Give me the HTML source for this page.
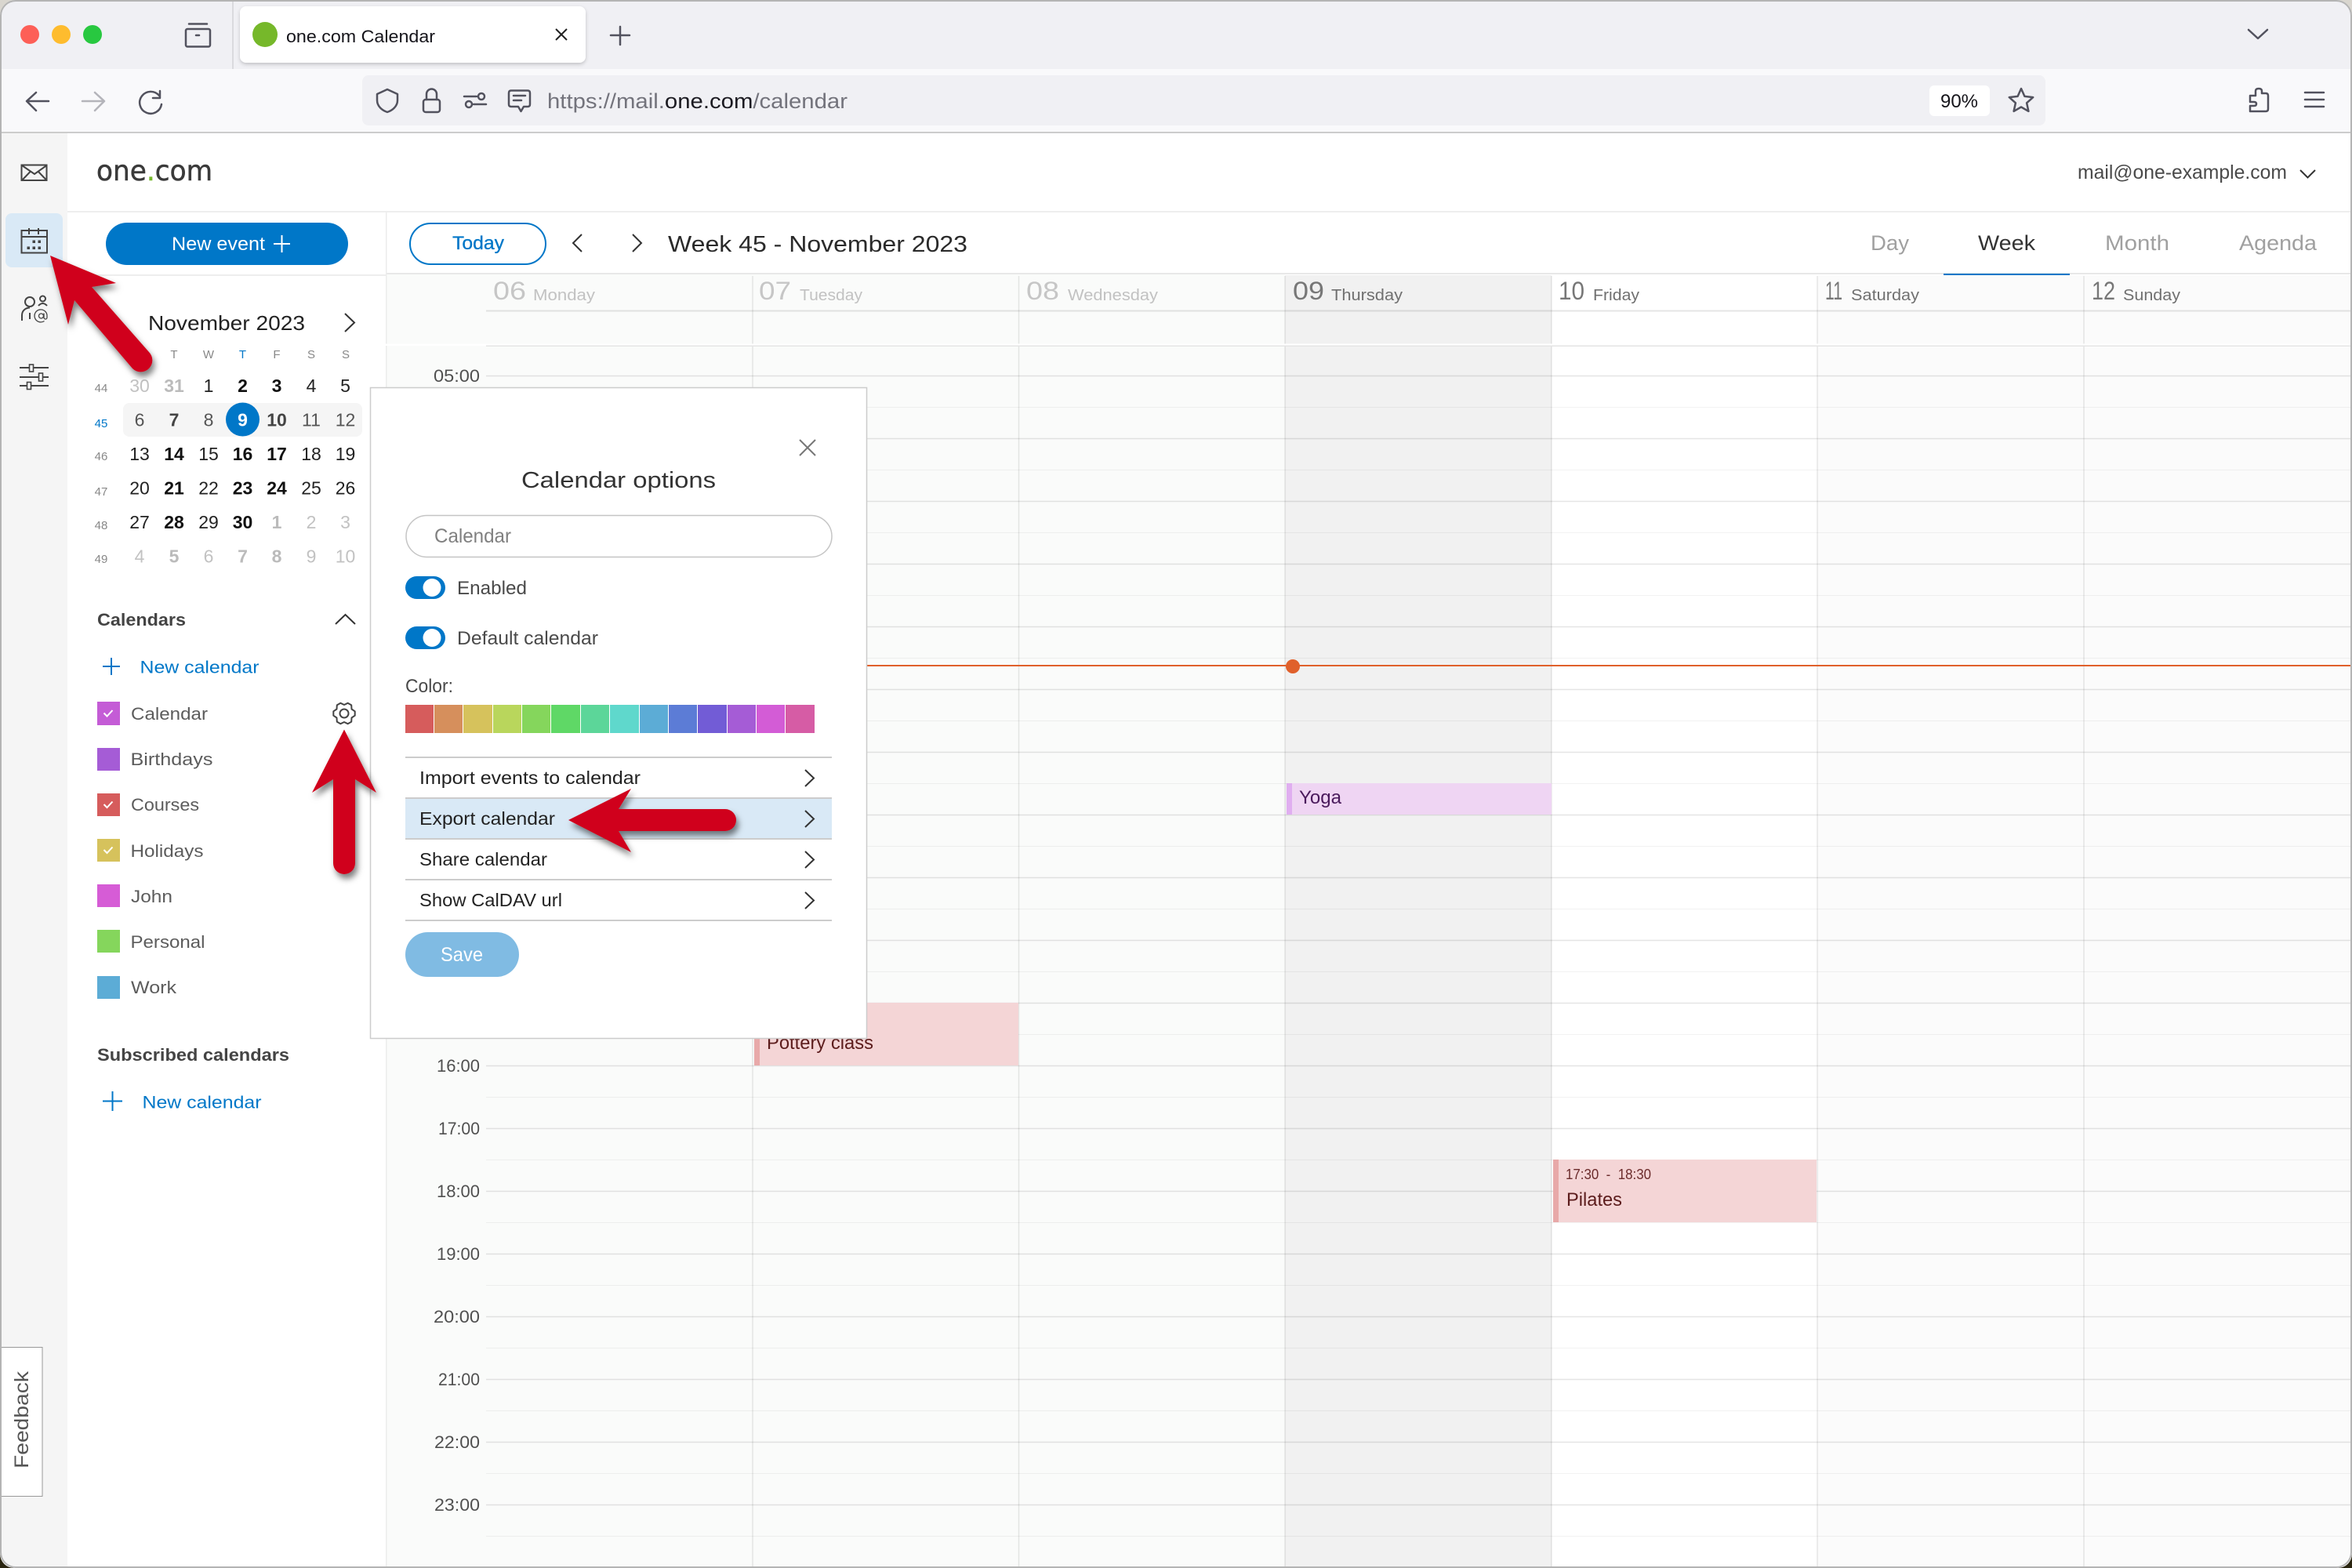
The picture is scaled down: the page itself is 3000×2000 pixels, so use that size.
<!DOCTYPE html>
<html lang="en"><head><meta charset="utf-8"><title>one.com Calendar</title>
<style>
html,body{margin:0;padding:0;background:#fff;width:3000px;height:2000px;overflow:hidden}
svg{display:block}
text{font-family:"Liberation Sans",Arial,sans-serif}
.ic{fill:none;stroke:#52525e;stroke-width:2.5;stroke-linecap:round;stroke-linejoin:round}
.si{fill:none;stroke:#444;stroke-width:2}
.ch{fill:none;stroke:#333;stroke-width:2}
.it{font-size:23px;fill:#222}
.cl{font-size:22px;fill:#5c5c5c}
.hr{font-size:22px;fill:#505050}
.hd{font-size:32px}
.dn{font-size:20px}
.wk{font-size:15px;fill:#888}
.wd{font-size:15px;fill:#888}
.d{font-size:23px;fill:#222}
.db{font-size:23px;fill:#111;font-weight:700}
.g{font-size:23px;fill:#c2c2c2}
.gb{font-size:23px;fill:#bbb;font-weight:700}
.m{font-size:23px;fill:#555}
.mb{font-size:23px;fill:#444;font-weight:700}
</style></head>
<body>
<svg xmlns="http://www.w3.org/2000/svg" width="3000" height="2000" viewBox="0 0 3000 2000">
<defs>
<filter id="s" x="-30%" y="-30%" width="170%" height="170%"><feDropShadow dx="3" dy="6" stdDeviation="4" flood-color="#000" flood-opacity=".5"/></filter>
<filter id="t" x="-5%" y="-30%" width="110%" height="170%"><feDropShadow dx="0" dy="2" stdDeviation="2.5" flood-color="#000" flood-opacity=".2"/></filter>
</defs>

<!-- browser chrome -->
<rect width="3000" height="88" fill="#f0f0f4"/>
<rect y="88" width="3000" height="80" fill="#f9f9fb"/>
<rect y="168" width="3000" height="2" fill="#cccccc"/>
<circle cx="38" cy="44" r="12" fill="#fd5f57"/>
<circle cx="78" cy="44" r="12" fill="#febc2e"/>
<circle cx="118" cy="44" r="12" fill="#28c840"/>
<g class="ic">
<path d="M241 30.5H264"/><rect x="237" y="37" width="31" height="22.5" rx="2"/><path d="M250 45H254"/>
</g>
<rect x="296.5" y="0" width="1" height="88" fill="#c4c4c8"/>
<rect x="306" y="8" width="441" height="72" rx="8" fill="#fff" filter="url(#t)"/>
<circle cx="338" cy="44" r="16" fill="#76b82a"/>
<text x="365" y="54" font-size="22.5" fill="#15141a" textLength="190" lengthAdjust="spacingAndGlyphs">one.com Calendar</text>
<path d="M709 37L723 51M723 37L709 51" fill="none" stroke="#222" stroke-width="2"/>
<g class="ic">
<path d="M791 34V57M779 45H803"/>
<path d="M2868 38L2880 49L2892 38"/>
<path d="M62 129H35M46 118L34 129L46 141"/>
<path d="M105 129H132M121 118L133 129L121 141" stroke="#b4b4ba"/>
<path d="M203 122A14 14 0 1 0 206 133M204 116V125H195"/>
</g>
<rect x="462" y="96" width="2147" height="64" rx="8" fill="#f0f0f4"/>
<g class="ic">
<path d="M494 114L507 120V128C507 136 500 141 494 143C488 141 481 136 481 128V120Z"/>
<path d="M544 127V120A6.5 6.5 0 0 1 557 120V127"/><rect x="540" y="127" width="21" height="16" rx="3"/>
<path d="M592 123H608M604 133H620"/><circle cx="614" cy="123" r="4"/><circle cx="598" cy="133" r="4"/>
<path d="M652 115.5H673Q676 115.5 676 118.5V133Q676 136 673 136H668L664.5 142L661 136H652Q649 136 649 133V118.5Q649 115.5 652 115.5Z"/>
<path d="M655 122H670M655 128H665"/>
<path d="M2578 113L2582.4 122.9L2593.2 124.1L2585.1 131.3L2587.4 141.9L2578 136.5L2568.6 141.9L2570.9 131.3L2562.8 124.1L2573.6 122.9Z"/>
<path d="M2870 142H2890Q2893 142 2893 139V122Q2893 119 2890 119H2885V116Q2885 113 2881 113Q2877 113 2877 116V122H2870V130H2875Q2878 130 2878 132.5Q2878 135 2875 135H2870Z"/>
<path d="M2940 118H2964M2940 127H2964M2940 136H2964"/>
</g>
<text x="698" y="138" font-size="27" fill="#73737c" textLength="383" lengthAdjust="spacingAndGlyphs">https://mail.<tspan fill="#1c1b22">one.com</tspan>/calendar</text>
<rect x="2461" y="109" width="77" height="39" rx="6" fill="#fff"/>
<text x="2475" y="137" font-size="24" fill="#15141a" textLength="48" lengthAdjust="spacingAndGlyphs">90%</text>

<!-- app backgrounds -->
<rect y="170" width="3000" height="1830" fill="#fff"/>
<rect y="170" width="86" height="1830" fill="#f5f5f5"/>
<rect x="492" y="350" width="1147" height="1650" fill="#fafbfa"/>
<rect x="1639" y="351" width="340" height="1649" fill="#f1f1f1"/>
<rect x="1979" y="351" width="339" height="1649" fill="#fff"/>
<rect x="2318" y="351" width="682" height="1649" fill="#fbfbfb"/>
<rect x="86" y="269" width="2914" height="2" fill="#eeeeee"/>
<rect x="86" y="350" width="406" height="2" fill="#eeeeee"/>
<rect x="492" y="348" width="2508" height="2" fill="#e8e8e8"/>
<rect x="492" y="270" width="1.5" height="1730" fill="#ececec"/>

<!-- grid lines -->
<rect x="620" y="395.5" width="2380" height="2" fill="#000" opacity=".1"/>
<path d="M620 479.5H3000M620 559.5H3000M620 639.5H3000M620 719.5H3000M620 799.5H3000M620 879.5H3000M620 959.5H3000M620 1039.5H3000M620 1119.5H3000M620 1199.5H3000M620 1279.5H3000M620 1359.5H3000M620 1439.5H3000M620 1519.5H3000M620 1599.5H3000M620 1679.5H3000M620 1759.5H3000M620 1839.5H3000M620 1919.5H3000" stroke="#000" stroke-opacity=".1" stroke-width="1.5" fill="none"/>
<path d="M620 519.5H3000M620 599.5H3000M620 679.5H3000M620 759.5H3000M620 839.5H3000M620 919.5H3000M620 999.5H3000M620 1079.5H3000M620 1159.5H3000M620 1239.5H3000M620 1319.5H3000M620 1399.5H3000M620 1479.5H3000M620 1559.5H3000M620 1639.5H3000M620 1719.5H3000M620 1799.5H3000M620 1879.5H3000M620 1959.5H3000" stroke="#000" stroke-opacity=".05" stroke-width="1" fill="none"/>
<path d="M960 352V2000M1299.5 352V2000M1639 352V2000M1979 352V2000M2318 352V2000M2658 352V2000" stroke="#000" stroke-opacity=".09" stroke-width="1.5" fill="none"/>
<rect x="492" y="438.5" width="2508" height="2.5" fill="#fff"/>
<rect x="620" y="440.5" width="2380" height="1.5" fill="#e4e4e4"/>

<!-- week header -->
<text x="629" y="382" class="hd" fill="#c6c6c6" textLength="42" lengthAdjust="spacingAndGlyphs">06</text>
<text x="680" y="383" class="dn" fill="#c2c2c2" textLength="79" lengthAdjust="spacingAndGlyphs">Monday</text>
<text x="968" y="382" class="hd" fill="#c6c6c6" textLength="41" lengthAdjust="spacingAndGlyphs">07</text>
<text x="1020" y="383" class="dn" fill="#c2c2c2" textLength="80" lengthAdjust="spacingAndGlyphs">Tuesday</text>
<text x="1309" y="382" class="hd" fill="#c6c6c6" textLength="42" lengthAdjust="spacingAndGlyphs">08</text>
<text x="1362" y="383" class="dn" fill="#c2c2c2" textLength="115" lengthAdjust="spacingAndGlyphs">Wednesday</text>
<text x="1649" y="382" class="hd" fill="#777" textLength="40" lengthAdjust="spacingAndGlyphs">09</text>
<text x="1698" y="383" class="dn" fill="#707070" textLength="91" lengthAdjust="spacingAndGlyphs">Thursday</text>
<text x="1988" y="382" class="hd" fill="#777" textLength="33" lengthAdjust="spacingAndGlyphs">10</text>
<text x="2032" y="383" class="dn" fill="#707070" textLength="59" lengthAdjust="spacingAndGlyphs">Friday</text>
<text x="2328" y="382" class="hd" fill="#777" textLength="22" lengthAdjust="spacingAndGlyphs">11</text>
<text x="2361" y="383" class="dn" fill="#707070" textLength="87" lengthAdjust="spacingAndGlyphs">Saturday</text>
<text x="2668" y="382" class="hd" fill="#777" textLength="30" lengthAdjust="spacingAndGlyphs">12</text>
<text x="2708" y="383" class="dn" fill="#707070" textLength="73" lengthAdjust="spacingAndGlyphs">Sunday</text>

<!-- hours -->
<text x="553" y="487" class="hr" textLength="59" lengthAdjust="spacingAndGlyphs">05:00</text>
<text x="557" y="1367" class="hr" textLength="55" lengthAdjust="spacingAndGlyphs">16:00</text>
<text x="559" y="1447" class="hr" textLength="53" lengthAdjust="spacingAndGlyphs">17:00</text>
<text x="557" y="1527" class="hr" textLength="55" lengthAdjust="spacingAndGlyphs">18:00</text>
<text x="557" y="1607" class="hr" textLength="55" lengthAdjust="spacingAndGlyphs">19:00</text>
<text x="553" y="1687" class="hr" textLength="59" lengthAdjust="spacingAndGlyphs">20:00</text>
<text x="559" y="1767" class="hr" textLength="53" lengthAdjust="spacingAndGlyphs">21:00</text>
<text x="554" y="1847" class="hr" textLength="58" lengthAdjust="spacingAndGlyphs">22:00</text>
<text x="554" y="1927" class="hr" textLength="58" lengthAdjust="spacingAndGlyphs">23:00</text>

<!-- events -->
<rect x="962" y="1279" width="337" height="80" fill="#f4d5d6"/><rect x="962" y="1279" width="7" height="80" fill="#e8a9a9"/>
<text x="978" y="1338" font-size="24" fill="#5c1c1c" textLength="136" lengthAdjust="spacingAndGlyphs">Pottery class</text>
<rect x="1641" y="999" width="338" height="40" fill="#efd5f3"/><rect x="1641" y="999" width="7" height="40" fill="#e0aef0"/>
<text x="1657" y="1025" font-size="24" fill="#4a1a5c" textLength="54" lengthAdjust="spacingAndGlyphs">Yoga</text>
<rect x="1981" y="1479" width="336" height="80" fill="#f4d5d6"/><rect x="1981" y="1479" width="7" height="80" fill="#e8a9a9"/>
<text x="1997" y="1504" font-size="18" fill="#6c2c2c" textLength="109" lengthAdjust="spacingAndGlyphs" xml:space="preserve">17:30  -  18:30</text>
<text x="1998" y="1538" font-size="24" fill="#5c1c1c" textLength="71" lengthAdjust="spacingAndGlyphs">Pilates</text>

<!-- now line -->
<rect x="1100" y="848" width="1900" height="2" fill="#e0602b"/>
<circle cx="1649" cy="850" r="9" fill="#e0602b"/>

<!-- nav rail -->
<rect x="7" y="272" width="73" height="69" rx="8" fill="#d9e9f6"/>
<g class="si" stroke-width="1.6">
<rect x="27.5" y="210.5" width="32" height="19.5"/>
<path d="M28 211L44 222L59.5 211M28 230L39 218.5M59.5 230L48.5 218.5"/>
</g>
<g class="si">
<rect x="27.5" y="294" width="32.5" height="28.5"/>
<path d="M27.5 302H60M37 291V299M49 291V299"/>
</g>
<g fill="#444">
<rect x="41.5" y="306.5" width="3.5" height="3.5"/><rect x="48.5" y="306.5" width="3.5" height="3.5"/>
<rect x="34.5" y="314.5" width="3.5" height="3.5"/><rect x="41.5" y="314.5" width="3.5" height="3.5"/><rect x="48.5" y="314.5" width="3.5" height="3.5"/>
</g>
<g class="si">
<circle cx="38" cy="385" r="6"/>
<path d="M28 409V402C28 396 33 392.5 38 392.5M38 399V407"/>
<circle cx="54.5" cy="381" r="3.5"/>
<path d="M49 390Q54.5 384 60 390"/>
<path d="M56.5 409.5A8 8 0 1 1 60 403.5V405A2 2 0 0 1 56 405V399.5" stroke-width="1.3"/>
<circle cx="52.5" cy="403" r="3" stroke-width="1.3"/>
<path d="M25 469H62M25 481H62M25 492H62"/>
</g>
<g fill="#f5f5f5" stroke="#444" stroke-width="1.6">
<rect x="37.5" y="465" width="5" height="9"/><rect x="49.5" y="476" width="5" height="10"/><rect x="34.5" y="487.5" width="5" height="9"/>
</g>

<!-- header -->
<text x="123" y="230" style="font-family:'DejaVu Sans','Liberation Sans',sans-serif" font-size="36" fill="#3a3a3a" stroke="#3a3a3a" stroke-width=".5" textLength="148" lengthAdjust="spacingAndGlyphs">one<tspan fill="#76b82a" stroke="#76b82a">.</tspan>com</text>
<text x="2650" y="228" font-size="25" fill="#4a4a4a" textLength="267" lengthAdjust="spacingAndGlyphs">mail@one-example.com</text>
<path d="M2934 217L2943.5 226.5L2953 217" class="ch"/>

<!-- left panel -->
<rect x="135" y="284" width="309" height="54" rx="27" fill="#0077c8"/>
<text x="219" y="319" font-size="24" fill="#fff" textLength="119" lengthAdjust="spacingAndGlyphs">New event</text>
<path d="M359.5 300V322M349 311H370" stroke="#fff" stroke-width="2" fill="none"/>

<!-- toolbar -->
<rect x="523" y="285" width="173" height="52" rx="26" fill="#fff" stroke="#0077c8" stroke-width="2"/>
<text x="577" y="318" font-size="24" fill="#0077c8" stroke="#0077c8" stroke-width=".3" textLength="66" lengthAdjust="spacingAndGlyphs">Today</text>
<path d="M742 299L731 310L742 321M807 299L818 310L807 321" class="ch"/>
<text x="852" y="321" font-size="29" fill="#2a2a2a" textLength="382" lengthAdjust="spacingAndGlyphs">Week 45 - November 2023</text>
<text x="2386" y="319" font-size="27" fill="#a0a0a0" textLength="49" lengthAdjust="spacingAndGlyphs">Day</text>
<text x="2523" y="319" font-size="27" fill="#333" textLength="73" lengthAdjust="spacingAndGlyphs">Week</text>
<text x="2685" y="319" font-size="27" fill="#a0a0a0" textLength="82" lengthAdjust="spacingAndGlyphs">Month</text>
<text x="2856" y="319" font-size="27" fill="#a0a0a0" textLength="99" lengthAdjust="spacingAndGlyphs">Agenda</text>
<rect x="2479" y="349" width="161" height="2" fill="#0077c8"/>

<!-- mini calendar -->
<text x="189" y="421" font-size="26" fill="#222" textLength="200" lengthAdjust="spacingAndGlyphs">November 2023</text>
<path d="M440 400L452 411.5L440 423" class="ch"/>
<rect x="157" y="514" width="305" height="43" rx="8" fill="#f5f5f5"/>
<circle cx="309.5" cy="535" r="21.5" fill="#0077c8"/>
<g text-anchor="middle">
<text x="222" y="457" class="wd">T</text><text x="266" y="457" class="wd">W</text><text x="309.5" y="457" class="wd" style="fill:#0077c8">T</text><text x="353" y="457" class="wd">F</text><text x="397" y="457" class="wd">S</text><text x="441" y="457" class="wd">S</text>
<text x="129" y="500" class="wk">44</text><text x="129" y="545" class="wk" style="fill:#0077c8">45</text><text x="129" y="587" class="wk">46</text><text x="129" y="632" class="wk">47</text><text x="129" y="675" class="wk">48</text><text x="129" y="718" class="wk">49</text>

<text x="178" y="500" class="g">30</text><text x="222" y="500" class="gb">31</text><text x="266" y="500" class="d">1</text><text x="309.5" y="500" class="db">2</text><text x="353" y="500" class="db">3</text><text x="397" y="500" class="d">4</text><text x="440.5" y="500" class="d">5</text>

<text x="178" y="543.5" class="m">6</text><text x="222" y="543.5" class="mb">7</text><text x="266" y="543.5" class="m">8</text><text x="309.5" y="543.5" class="db" style="fill:#fff">9</text><text x="353" y="543.5" class="mb">10</text><text x="397" y="543.5" class="m">11</text><text x="440.5" y="543.5" class="m">12</text>

<text x="178" y="587" class="d">13</text><text x="222" y="587" class="db">14</text><text x="266" y="587" class="d">15</text><text x="309.5" y="587" class="db">16</text><text x="353" y="587" class="db">17</text><text x="397" y="587" class="d">18</text><text x="440.5" y="587" class="d">19</text>

<text x="178" y="630.5" class="d">20</text><text x="222" y="630.5" class="db">21</text><text x="266" y="630.5" class="d">22</text><text x="309.5" y="630.5" class="db">23</text><text x="353" y="630.5" class="db">24</text><text x="397" y="630.5" class="d">25</text><text x="440.5" y="630.5" class="d">26</text>

<text x="178" y="674" class="d">27</text><text x="222" y="674" class="db">28</text><text x="266" y="674" class="d">29</text><text x="309.5" y="674" class="db">30</text><text x="353" y="674" class="gb">1</text><text x="397" y="674" class="g">2</text><text x="440.5" y="674" class="g">3</text>

<text x="178" y="717.5" class="g">4</text><text x="222" y="717.5" class="gb">5</text><text x="266" y="717.5" class="g">6</text><text x="309.5" y="717.5" class="gb">7</text><text x="353" y="717.5" class="gb">8</text><text x="397" y="717.5" class="g">9</text><text x="440.5" y="717.5" class="g">10</text>
</g>

<!-- calendars list -->
<text x="124" y="798" font-size="22" font-weight="700" fill="#444" textLength="113" lengthAdjust="spacingAndGlyphs">Calendars</text>
<path d="M428 796L440.5 784L453 796" class="ch"/>
<path d="M142 839V861M131 850H153" stroke="#0077c8" stroke-width="2" fill="none"/>
<text x="178.5" y="858.5" font-size="22" fill="#0077c8" textLength="152" lengthAdjust="spacingAndGlyphs">New calendar</text>

<rect x="124" y="895" width="29" height="30" fill="#c45cd6"/>
<rect x="124" y="954" width="29" height="29" fill="#a55cd6"/>
<rect x="124" y="1012" width="29" height="29" fill="#d65c5c"/>
<rect x="124" y="1070" width="29" height="29" fill="#d6c25c"/>
<rect x="124" y="1128" width="29" height="29" fill="#d65cd6"/>
<rect x="124" y="1186" width="29" height="29" fill="#85d65c"/>
<rect x="124" y="1245" width="29" height="29" fill="#5cacd6"/>
<path d="M132.5 909.5L136.5 913.5L143.5 906M132.5 1026L136.5 1030L143.5 1022.5M132.5 1084L136.5 1088L143.5 1080.5" stroke="#fff" stroke-width="2" fill="none"/>

<text x="167" y="918" class="cl" textLength="98" lengthAdjust="spacingAndGlyphs">Calendar</text>
<text x="166.5" y="976" class="cl" textLength="105" lengthAdjust="spacingAndGlyphs">Birthdays</text>
<text x="167" y="1034" class="cl" textLength="87" lengthAdjust="spacingAndGlyphs">Courses</text>
<text x="166.5" y="1093" class="cl" textLength="93" lengthAdjust="spacingAndGlyphs">Holidays</text>
<text x="167" y="1151" class="cl" textLength="53" lengthAdjust="spacingAndGlyphs">John</text>
<text x="166.5" y="1209" class="cl" textLength="95" lengthAdjust="spacingAndGlyphs">Personal</text>
<text x="167" y="1267" class="cl" textLength="58" lengthAdjust="spacingAndGlyphs">Work</text>

<g transform="translate(439 910)" fill="none" stroke="#444" stroke-width="2" stroke-linejoin="round">
<path d="M13.7 2.7L9.5 5.5L9.2 10.6L4.6 13.2L0 11L-4.6 13.2L-9.2 10.6L-9.5 5.5L-13.7 2.7L-13.7 -2.7L-9.5 -5.5L-9.2 -10.6L-4.6 -13.2L0 -11L4.6 -13.2L9.2 -10.6L9.5 -5.5L13.7 -2.7Z"/>
<circle r="5.5"/>
</g>

<text x="124" y="1353" font-size="22" font-weight="700" fill="#444" textLength="245" lengthAdjust="spacingAndGlyphs">Subscribed calendars</text>
<path d="M143.5 1392V1417M131 1404.5H156" stroke="#0077c8" stroke-width="2" fill="none"/>
<text x="181.5" y="1413.5" font-size="22" fill="#0077c8" textLength="152" lengthAdjust="spacingAndGlyphs">New calendar</text>

<!-- feedback -->
<rect x="-2" y="1718.5" width="56" height="190" fill="#fff" stroke="#999" stroke-width="1"/>
<text transform="translate(36 1873) rotate(-90)" font-size="25" fill="#555" textLength="124" lengthAdjust="spacingAndGlyphs">Feedback</text>

<!-- modal -->
<rect x="472.5" y="494.5" width="633" height="830" fill="#fff" stroke="#cccccc" stroke-width="1.5"/>
<path d="M1020 561L1040 581M1040 561L1020 581" stroke="#777" stroke-width="2" fill="none"/>
<text x="665" y="622" font-size="29" fill="#333" textLength="248" lengthAdjust="spacingAndGlyphs">Calendar options</text>
<rect x="518" y="657.5" width="543" height="53" rx="26.5" fill="#fff" stroke="#c5c5c5" stroke-width="1.5"/>
<text x="554" y="692" font-size="25" fill="#808080" textLength="98" lengthAdjust="spacingAndGlyphs">Calendar</text>
<rect x="517" y="735" width="51" height="29" rx="14.5" fill="#0077c8"/><circle cx="551" cy="749.5" r="11.5" fill="#fff"/>
<text x="583" y="758" font-size="24" fill="#4a4a4a" textLength="89" lengthAdjust="spacingAndGlyphs">Enabled</text>
<rect x="517" y="799" width="51" height="29" rx="14.5" fill="#0077c8"/><circle cx="551" cy="813.5" r="11.5" fill="#fff"/>
<text x="583" y="822" font-size="24" fill="#4a4a4a" textLength="180" lengthAdjust="spacingAndGlyphs">Default calendar</text>
<text x="517" y="883" font-size="24" fill="#4a4a4a" textLength="61" lengthAdjust="spacingAndGlyphs">Color:</text>
<g>
<rect x="517" y="899" width="36" height="36" fill="#d65c5c"/>
<rect x="554" y="899" width="36" height="36" fill="#d68f5c"/>
<rect x="591" y="899" width="37" height="36" fill="#d6c25c"/>
<rect x="629" y="899" width="36" height="36" fill="#b9d65c"/>
<rect x="666" y="899" width="36" height="36" fill="#85d65c"/>
<rect x="703" y="899" width="37" height="36" fill="#5fd866"/>
<rect x="741" y="899" width="36" height="36" fill="#5cd699"/>
<rect x="778" y="899" width="37" height="36" fill="#5fd8cc"/>
<rect x="816" y="899" width="36" height="36" fill="#5cacd6"/>
<rect x="853" y="899" width="36" height="36" fill="#5c7cd6"/>
<rect x="890" y="899" width="37" height="36" fill="#725cd6"/>
<rect x="928" y="899" width="36" height="36" fill="#a55cd6"/>
<rect x="965" y="899" width="36" height="36" fill="#d35cd6"/>
<rect x="1002" y="899" width="37" height="36" fill="#d65ca5"/>
</g>
<rect x="517" y="1018" width="544" height="52" fill="#d9e9f6"/>
<path d="M517 966H1061M517 1018H1061M517 1070H1061M517 1122H1061M517 1174H1061" stroke="#cccccc" stroke-width="2" fill="none"/>
<text x="535" y="1000" class="it" textLength="282" lengthAdjust="spacingAndGlyphs">Import events to calendar</text>
<text x="535" y="1052" class="it" textLength="173" lengthAdjust="spacingAndGlyphs">Export calendar</text>
<text x="535" y="1104" class="it" textLength="163" lengthAdjust="spacingAndGlyphs">Share calendar</text>
<text x="535" y="1156" class="it" textLength="182" lengthAdjust="spacingAndGlyphs">Show CalDAV url</text>
<path d="M1027 982L1038 992.5L1027 1003M1027 1034L1038 1044.5L1027 1055M1027 1086L1038 1096.5L1027 1107M1027 1138L1038 1148.5L1027 1159" class="ch"/>
<rect x="517" y="1189" width="145" height="57" rx="28.5" fill="#80bbe3"/>
<text x="562" y="1226" font-size="25" fill="#fff" textLength="54" lengthAdjust="spacingAndGlyphs">Save</text>

<!-- annotation arrows -->
<g fill="#d0021b" filter="url(#s)">
<path d="M64 326L148 361L117 366L190 449A14.5 14.5 0 0 1 169 470L95 383L87 414Z"/>
<path d="M439 930.5L480 1011L453 994V1101A14 14 0 0 1 425 1101V994L398 1011Z"/>
<path d="M725 1046L805 1006L789 1032H925A14 14 0 0 1 925 1060H789L805 1087Z"/>
</g>

<!-- window frame and corners -->
<path d="M0 0H20A20 20 0 0 0 0 20Z" fill="#d9d6cf"/>
<path d="M3000 0H2980A20 20 0 0 1 3000 20Z" fill="#d9d6cf"/>
<path d="M0 2000H18A18 18 0 0 1 0 1982Z" fill="#2a2510"/>
<path d="M3000 2000H2982A18 18 0 0 0 3000 1982Z" fill="#2a2510"/>
<rect x="1" y="1" width="2998" height="1998" rx="19" fill="none" stroke="#b4b4b4" stroke-width="2"/>
</svg>
</body></html>
